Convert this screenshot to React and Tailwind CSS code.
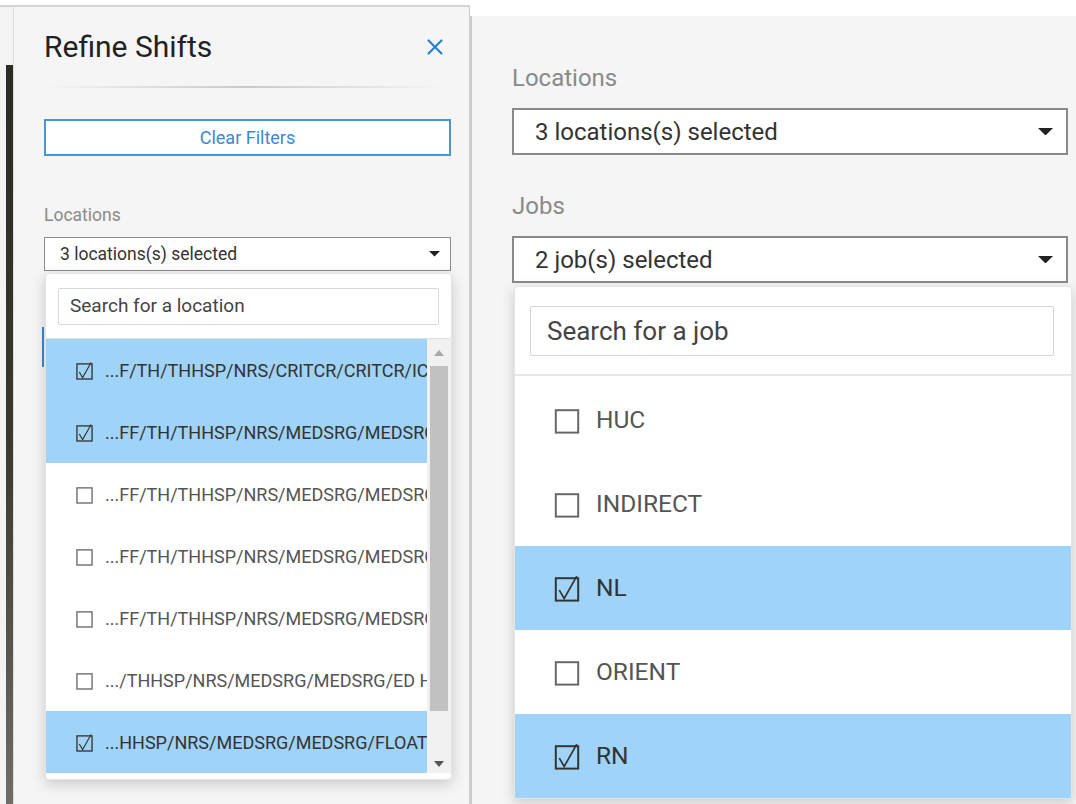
import { X } from 'lucide-react'

const locations = [
  { label: '...F/TH/THHSP/NRS/CRITCR/CRITCR/ICU', on: true },
  { label: '...FF/TH/THHSP/NRS/MEDSRG/MEDSRG/4N', on: true },
  { label: '...FF/TH/THHSP/NRS/MEDSRG/MEDSRG/5N', on: false },
  { label: '...FF/TH/THHSP/NRS/MEDSRG/MEDSRG/6N', on: false },
  { label: '...FF/TH/THHSP/NRS/MEDSRG/MEDSRG/7N', on: false },
  { label: '.../THHSP/NRS/MEDSRG/MEDSRG/ED HOLD', on: false },
  { label: '...HHSP/NRS/MEDSRG/MEDSRG/FLOAT POOL', on: true },
]

const jobs = [
  { label: 'HUC', on: false },
  { label: 'INDIRECT', on: false },
  { label: 'NL', on: true },
  { label: 'ORIENT', on: false },
  { label: 'RN', on: true },
]

const font = { fontFamily: 'Roboto, "Liberation Sans", sans-serif' }

function Box({ on, size }) {
  return (
    <svg width={size} height={size + 2} viewBox="0 0 18 20" className="shrink-0 overflow-visible">
      <rect x="1" y="3" width="16" height="16" fill="none" stroke={on ? '#333' : '#666'} strokeWidth="1.4" />
      {on && <path d="M3.5 11.5 L7 17.5 L16 1.5" fill="none" stroke="#333" strokeWidth="1.2" />}
    </svg>
  )
}

function Caret({ w }) {
  return (
    <svg width={w} height={w / 2} viewBox="0 0 10 5" className="shrink-0">
      <path d="M0 0 L10 0 L5 5 Z" fill="#222" />
    </svg>
  )
}

function RefinePanel() {
  return (
    <div className="w-[470px] h-full flex flex-col shrink-0">
      <div className="h-[5px] bg-white" />
      <div className="h-[2px] bg-[#d4d4d4]" />
      <div className="flex flex-1 min-h-0">
        <div className="w-[13px] shrink-0 flex flex-col bg-[#f3f3f3]">
          <div className="h-[58px]" />
          <div className="flex-1 ml-[6px] bg-linear-to-b from-[#2c2b22] via-[#3a382c] to-[#6f6d64]" />
        </div>
        <div className="flex-1 min-w-0 bg-[#f5f5f5] border-l border-[#dcdcdc] border-r border-r-[#cfcfcf] pl-[30px] pr-[18px] pt-[20px]">
          <div className="h-[40px] flex items-center justify-between">
            <span className="text-[30px] text-[#222] leading-none">Refine Shifts</span>
            <X size={26} strokeWidth={2} className="text-[#2b7fd0] mr-[3px]" />
          </div>
          <div className="mt-[19px] h-[2px] mx-[1px] mr-[6px] bg-linear-to-r from-transparent via-[#c9c9c9] to-transparent" />
          <button className="mt-[31px] w-full h-[37px] border-2 border-[#4a95d8] bg-white text-[#3a8ad3] text-[18px]">
            Clear Filters
          </button>
          <div className="mt-[49px] text-[17.5px] leading-[20px] text-[#8a8a8a]">Locations</div>
          <div className="relative">
            <div className="absolute -left-[2px] top-[90px] w-[2px] h-[40px] bg-[#3a8ad3]" />
            <div className="mt-[12px] h-[34px] border border-[#8a8a8a] bg-white flex items-center justify-between pl-[15px] pr-[10px]">
              <span className="text-[17.5px] text-[#333]">3 locations(s) selected</span>
              <Caret w={11} />
            </div>
            <div className="relative mt-[2px] ml-[1px] -mr-[1px] bg-white border border-[#e3e3e3] rounded-[4px] shadow-[0_4px_14px_rgba(0,0,0,0.18)]">
              <div className="px-[12px] pt-[14px] pb-[13px] border-b border-[#e2e2e2]">
                <div className="h-[37px] border border-[#d8d8d8] rounded-[2px] flex items-center pl-[11px] text-[19px] text-[#444]">
                  Search for a location
                </div>
              </div>
              <div className="flex h-[434px]">
                <div className="flex-1 min-w-0 flex flex-col">
                  {locations.map((l, i) => (
                    <div key={i} className={`h-[62px] shrink-0 flex items-center gap-[12px] pl-[30px] overflow-hidden whitespace-nowrap ${l.on ? 'bg-[#9fd3f7] text-[#333]' : 'text-[#555]'}`}>
                      <Box on={l.on} size={17} />
                      <span className="text-[18px]">{l.label}</span>
                    </div>
                  ))}
                </div>
                <div className="w-[24px] shrink-0 bg-[#f1f1f1] flex flex-col items-center">
                  <svg width="10" height="6" viewBox="0 0 10 6" className="mt-[11px]"><path d="M0 6 L10 6 L5 0 Z" fill="#a8a8a8" /></svg>
                  <div className="mt-[10px] w-[18px] h-[345px] bg-[#c1c1c1]" />
                  <div className="flex-1" />
                  <svg width="10" height="6" viewBox="0 0 10 6" className="mb-[6px]"><path d="M0 0 L10 0 L5 6 Z" fill="#555" /></svg>
                </div>
              </div>
              <div className="h-[6px]" />
            </div>
          </div>
        </div>
      </div>
    </div>
  )
}

function JobsPanel() {
  return (
    <div className="flex-1 h-full flex flex-col bg-white pt-[16px]">
      <div className="flex-1 bg-[#f5f5f5] border-l-2 border-[#cbcbcb] pl-[40px] pr-[8px]">
        <div className="mt-[49px] text-[24px] leading-[26px] text-[#8a8a8a]">Locations</div>
        <div className="mt-[17px] h-[47px] border-2 border-[#8a8a8a] bg-white flex items-center justify-between pl-[21px] pr-[13px]">
          <span className="text-[24px] text-[#333]">3 locations(s) selected</span>
          <Caret w={15} />
        </div>
        <div className="mt-[38px] text-[24px] leading-[26px] text-[#8a8a8a]">Jobs</div>
        <div className="mt-[17px] h-[47px] border-2 border-[#8a8a8a] bg-white flex items-center justify-between pl-[21px] pr-[13px]">
          <span className="text-[24px] text-[#333]">2 job(s) selected</span>
          <Caret w={15} />
        </div>
        <div className="mt-[3px] ml-[2px] -mr-[4px] bg-white border border-[#e5e5e5] rounded-[4px] shadow-[0_4px_14px_rgba(0,0,0,0.18)]">
          <div className="pl-[15px] pr-[17px] pt-[19px] pb-[18px] border-b-2 border-[#e6e6e6]">
            <div className="h-[50px] border border-[#d6d6d6] rounded-[2px] flex items-center pl-[16px] text-[26px] text-[#444]">
              Search for a job
            </div>
          </div>
          <div className="pt-[2px]">
            {jobs.map((j, i) => (
              <div key={i} className={`h-[84px] flex items-center gap-[16px] pl-[39px] ${j.on ? 'bg-[#9fd3f7] text-[#333]' : 'text-[#555]'}`}>
                <Box on={j.on} size={26} />
                <span className="text-[24.5px]">{j.label}</span>
              </div>
            ))}
          </div>
        </div>
      </div>
    </div>
  )
}

export default function App() {
  return (
    <div className="w-[1076px] h-[804px] flex overflow-hidden bg-white" style={font}>
      <RefinePanel />
      <JobsPanel />
    </div>
  )
}
